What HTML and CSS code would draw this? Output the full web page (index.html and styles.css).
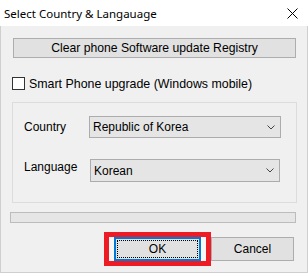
FILE: index.html
```html
<html>
<head>
    <link rel="stylesheet" href="styles.css">
</head>
<body>
<div class="window">
    <div class="titlebar">
        <span class="title">Select Country &amp; Langauage</span>
        <svg class="close" width="11" height="11" viewBox="0 0 11 11">
            <path d="M0.5 0.5 L10.5 10.5 M10.5 0.5 L0.5 10.5" stroke="#000" stroke-width="1" fill="none"/>
        </svg>
    </div>
    <div class="content">
        <div class="btn clear">Clear phone Software update Registry</div>
        <div class="check"><span class="box"></span>Smart Phone upgrade (Windows mobile)</div>
        <div class="group">
            <div class="row">
                <span class="lbl">Country</span>
                <div class="combo">
                    <span>Republic of Korea</span>
                    <svg class="arrow" width="8" height="5" viewBox="0 0 8 5"><path d="M0.5 0.5 L4 4 L7.5 0.5" stroke="#444" fill="none"/></svg>
                </div>
            </div>
            <div class="row lang">
                <span class="lbl">Language</span>
                <div class="combo">
                    <span>Korean</span>
                    <svg class="arrow" width="8" height="5" viewBox="0 0 8 5"><path d="M0.5 0.5 L4 4 L7.5 0.5" stroke="#444" fill="none"/></svg>
                </div>
            </div>
        </div>
        <div class="progress"></div>
        <div class="actions">
            <div class="mark">
                <div class="btn ok"><span class="focus">OK</span></div>
            </div>
            <div class="btn cancel">Cancel</div>
        </div>
    </div>
</div>
</body>
</html>
```

FILE: styles.css
```css
body {
    margin: 0;
    background: #fff;
}
.window {
    width: 308px;
    height: 273px;
    box-sizing: border-box;
    border: 1px solid #cfcfcf;
    border-top: none;
    background: #f0f0f0;
    font-family: "Liberation Sans", Arial, sans-serif;
    font-size: 12px;
    color: #000;
}
.titlebar {
    height: 26px;
    margin: 0 -1px;
    background: #fff;
    display: flex;
    align-items: center;
    justify-content: space-between;
    padding: 0 10px 0 4px;
}
.title {
    font-family: "Noto Sans", sans-serif;
    font-size: 11.5px;
    color: #000;
}
.close {
    margin-top: 1px;
}
.btn {
    box-sizing: border-box;
    border: 1px solid #adadad;
    background: #e1e1e1;
    display: flex;
    align-items: center;
    justify-content: center;
}
.clear {
    height: 20px;
    margin: 12px 11px 0 12px;
    font-size: 12.2px;
}
.check {
    display: flex;
    align-items: center;
    height: 13px;
    margin: 19px 0 0 11px;
    font-size: 12.4px;
}
.box {
    width: 13px;
    height: 13px;
    box-sizing: border-box;
    border: 1px solid #333;
    background: #fff;
    margin-right: 4px;
}
.group {
    box-sizing: border-box;
    width: 285px;
    height: 101px;
    margin: 12px 0 0 11px;
    border: 1px solid #dcdcdc;
    padding: 13px 0 0 11px;
}
.row {
    display: flex;
    align-items: center;
}
.lbl {
    width: 65px;
}
.combo {
    box-sizing: border-box;
    width: 192px;
    height: 22px;
    border: 1px solid #acacac;
    background: #e5e5e5;
    display: flex;
    align-items: center;
    justify-content: space-between;
    padding: 0 5px 0 3px;
}
.lang {
    margin-top: 21px;
}
.lang .lbl {
    width: 66px;
    margin-bottom: 7px;
}
.lang .combo {
    width: 190px;
    height: 23px;
    padding-left: 3px;
}
.progress {
    box-sizing: border-box;
    width: 286px;
    height: 11px;
    margin: 9px 0 0 9px;
    border: 1px solid #bcbcbc;
    background: #e6e6e6;
}
.actions {
    display: flex;
    margin: 9px 0 0 103px;
}
.mark {
    box-sizing: border-box;
    width: 107px;
    height: 34px;
    border: 5px solid #ed1c24;
    background: #f7f7f7;
    padding: 0 5px;
}
.ok {
    height: 24px;
    border: 2px solid #0078d7;
    padding: 1px;
}
.focus {
    flex: 1;
    align-self: stretch;
    display: flex;
    align-items: center;
    justify-content: center;
    border: 1px dotted #000;
}
.cancel {
    width: 83px;
    height: 24px;
    margin-top: 5px;
}
```
